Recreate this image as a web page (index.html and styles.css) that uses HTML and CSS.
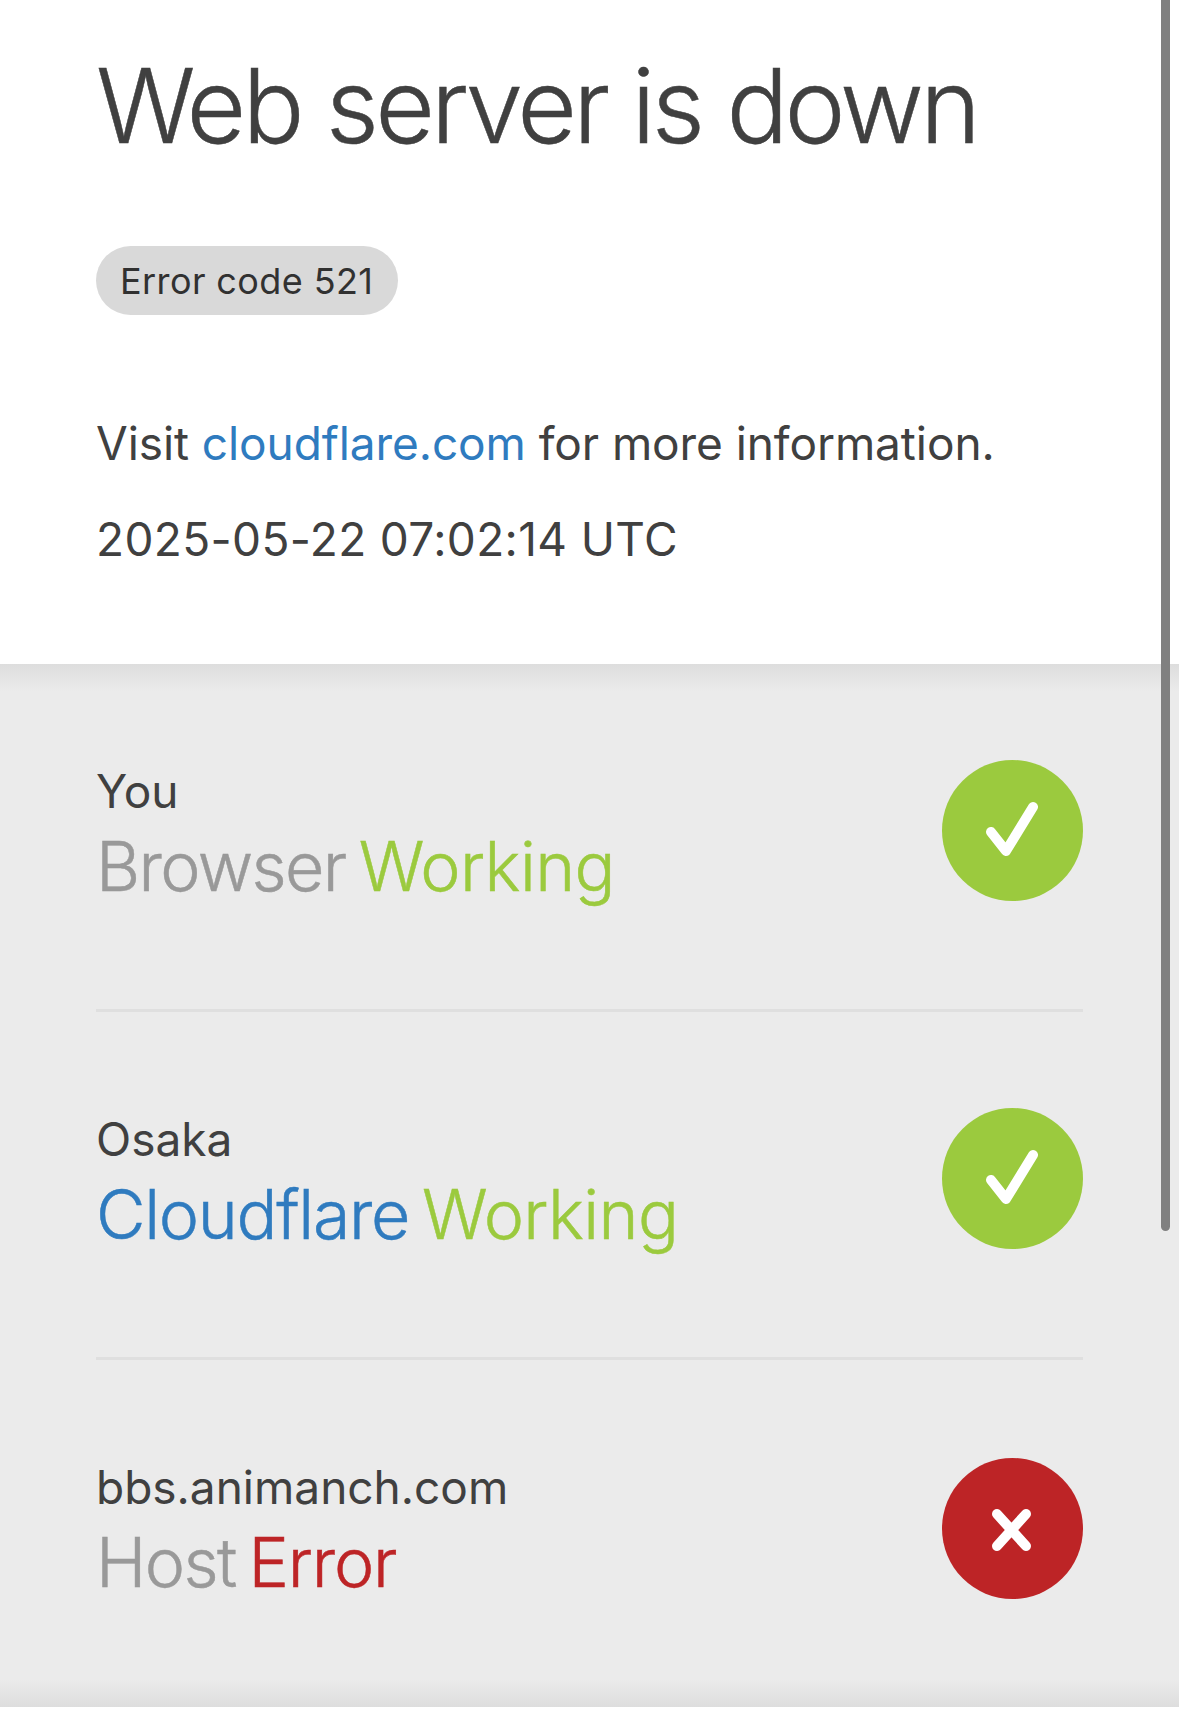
FILE: index.html
```html
<!DOCTYPE html>
<html lang="en">
<head>
    <meta charset="UTF-8">
    <title>Web server is down</title>
    <link rel="stylesheet" href="styles.css">
</head>
<body>
    <div class="scrollbar"></div>
    <header class="top">
        <h1>Web server is down</h1>
        <div class="badge">Error code 521</div>
        <p class="info">Visit <a href="#">cloudflare.com</a> for more information.</p>
        <p class="time">2025-05-22 07:02:14 UTC</p>
    </header>
    <section class="status">
        <div class="row">
            <div class="label">
                <div class="place">You</div>
                <div class="what"><span class="grey">Browser</span> <span class="green">Working</span></div>
            </div>
            <div class="circle ok">
                <svg viewBox="0 0 141 141" width="141" height="141"><path d="M49 72 L64 91 L91 47" /></svg>
            </div>
        </div>
        <div class="row">
            <div class="label">
                <div class="place">Osaka</div>
                <div class="what"><span class="blue">Cloudflare</span> <span class="green">Working</span></div>
            </div>
            <div class="circle ok">
                <svg viewBox="0 0 141 141" width="141" height="141"><path d="M49 72 L64 91 L91 47" /></svg>
            </div>
        </div>
        <div class="row">
            <div class="label">
                <div class="place">bbs.animanch.com</div>
                <div class="what"><span class="grey">Host</span> <span class="red">Error</span></div>
            </div>
            <div class="circle bad">
                <svg viewBox="0 0 141 141" width="141" height="141"><path d="M55 56 L84 88 M84 56 L55 88" /></svg>
            </div>
        </div>
    </section>
</body>
</html>
```

FILE: styles.css
```css
html, body {
    margin: 0;
    padding: 0;
    background: white;
}

body {
    font-family: Inter, "Noto Sans", sans-serif;
    color: #404040;
    height: 1728px;
    overflow: hidden;
    position: relative;
}

.scrollbar {
    position: absolute;
    top: -10px;
    right: 9px;
    width: 9px;
    height: 1241px;
    background: #808080;
    border-radius: 5px;
    z-index: 5;
}

.top {
    height: 664px;
    box-sizing: border-box;
    padding: 46px 96px 0;
}

h1 {
    margin: 0;
    font-size: 103px;
    line-height: 120px;
    font-weight: 300;
    letter-spacing: -3.8px;
    color: #404040;
    -webkit-text-stroke: 0.5px #404040;
}

.badge {
    display: inline-block;
    margin-top: 80px;
    padding: 1px 25px 0 24px;
    height: 68px;
    line-height: 69px;
    border-radius: 35px;
    background: #d9d9d9;
    color: #313131;
    font-size: 36px;
    letter-spacing: 0.4px;
}

.info, .time {
    margin: 0;
    font-size: 46px;
    line-height: 60px;
    color: #404040;
}

.info {
    margin-top: 98px;
    letter-spacing: -0.08px;
}

.time {
    margin-top: 36px;
    letter-spacing: 0.36px;
}

a {
    color: #2f7bbf;
    text-decoration: none;
}

.status {
    height: 1043px;
    box-sizing: border-box;
    padding: 96px 96px 0;
    background: linear-gradient(#dddddd, #ebebeb 28px, #ebebeb calc(100% - 28px), #dddddd);
}

.row {
    display: flex;
    justify-content: space-between;
    align-items: flex-start;
    height: 249px;
    margin-bottom: 96px;
    border-bottom: 3px solid #dfdfdf;
}

.row:last-child {
    border-bottom: none;
}

.label {
    padding-top: 1px;
}

.place {
    font-size: 46px;
    line-height: 60px;
    color: #404040;
}

.what {
    font-size: 68px;
    line-height: 91px;
    font-weight: 300;
    letter-spacing: -1.2px;
    word-spacing: -5px;
    -webkit-text-stroke: 0.5px;
}

.grey {
    color: #999999;
    letter-spacing: -1.6px;
}

.green {
    color: #9bca3e;
    letter-spacing: -0.6px;
}

.blue {
    color: #2f7bbf;
    letter-spacing: -1.3px;
}

.red { color: #bd2426; }

.circle {
    width: 141px;
    height: 141px;
    border-radius: 50%;
    flex-shrink: 0;
}

.ok { background: #9bca3e; }

.bad {
    background: #bd2426;
    margin-top: 2px;
}

.circle svg {
    display: block;
}

.circle path {
    fill: none;
    stroke: white;
    stroke-width: 10;
    stroke-linecap: round;
    stroke-linejoin: round;
}
```
